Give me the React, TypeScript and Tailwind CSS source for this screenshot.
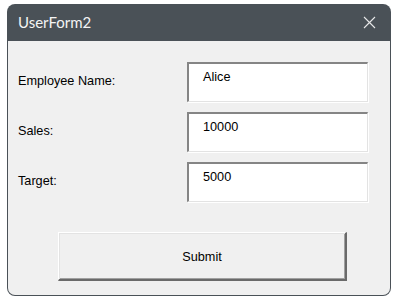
export default function App() {
  const fields = [
    { label: "Employee Name:", value: "Alice" },
    { label: "Sales:", value: "10000" },
    { label: "Target:", value: "5000" },
  ];

  return (
    <div className="h-[300px] w-[395px] bg-white pl-[7px] pt-[4px]">
      <div className="flex h-[292px] w-[384px] flex-col rounded-[8px] bg-[#4a5157] px-px pb-px">
        <div className="flex h-[37px] shrink-0 items-center justify-between pl-[10px] pr-[14px]">
          <span className="font-['Lato',sans-serif] text-[15px] text-[#f4f4f4]">UserForm2</span>
          <svg width="13" height="13" viewBox="0 0 13 13" className="text-[#e8e8e8]">
            <path d="M1 1 L12 12 M12 1 L1 12" stroke="currentColor" strokeWidth="1.1" fill="none" />
          </svg>
        </div>
        <div className="flex flex-1 flex-col rounded-b-[7px] bg-[#f0f0f0] px-[10px] pt-[21px] font-['Liberation_Sans',Arial,sans-serif] text-[12.7px] text-black">
          <div className="flex flex-col gap-[10px]">
            {fields.map((f) => (
              <div key={f.label} className="flex items-center">
                <div className="w-[169px] pb-[1px]">{f.label}</div>
                <div className="h-[40px] w-[181px] border-l-2 border-t-2 border-b border-r border-l-[#858585] border-t-[#858585] border-b-[#e3e3e3] border-r-[#e3e3e3] bg-white pl-[14px] pt-[6px] leading-[15px] shadow-[1px_1px_0_#ffffff]">
                  {f.value}
                </div>
              </div>
            ))}
          </div>
          <button className="ml-[40px] mt-[30px] h-[49px] w-[289px] border-b-2 border-l border-r-2 border-t border-b-[#6a6a6a] border-l-white border-r-[#6a6a6a] border-t-white bg-[#f0f0f0] pt-[4px] shadow-[inset_1px_1px_0_#e3e3e3,inset_-1px_-1px_0_#a0a0a0] text-black">
            Submit
          </button>
        </div>
      </div>
    </div>
  );
}
